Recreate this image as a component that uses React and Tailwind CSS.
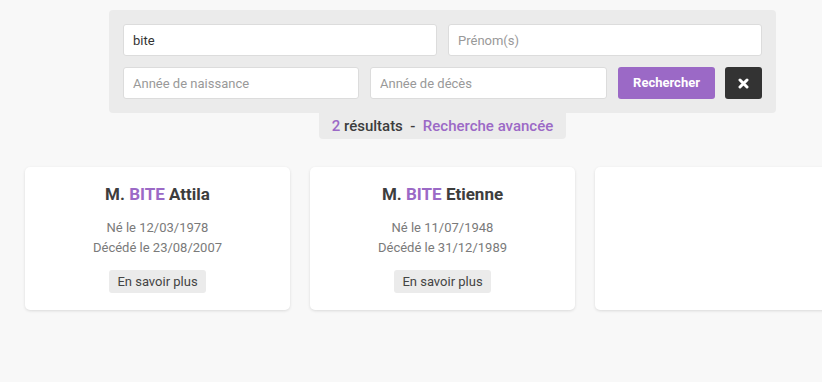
import { useState } from 'react'

const PEOPLE = [
  { civ: 'M.', nom: 'BITE', prenom: 'Attila', ne: '12/03/1978', dc: '23/08/2007' },
  { civ: 'M.', nom: 'BITE', prenom: 'Etienne', ne: '11/07/1948', dc: '31/12/1989' },
]

/* icône "fermer" façon fa-times, en trait épais */
function TimesIcon() {
  return (
    <svg width="11" height="11" viewBox="0 0 11 11">
      <path d="M2 2 L9 9 M9 2 L2 9" stroke="#fff" strokeWidth="3" strokeLinecap="round" />
    </svg>
  )
}

function Field({ value, onChange, placeholder, className = '' }) {
  return (
    <input value={value} onChange={e => onChange(e.target.value)} placeholder={placeholder}
      className={`h-8 min-w-0 rounded-[3px] border border-[#dcdcdc] bg-white px-[9px] text-[13px] text-[#333] placeholder:text-[#999] outline-none ${className}`} />
  )
}

function Card({ p }) {
  return (
    <div className="flex h-[143px] w-[265px] shrink-0 flex-col items-center rounded-[5px] bg-white shadow-[0_1px_3px_rgba(0,0,0,0.12)]">
      {p && (
        <>
          <div className="mt-[16px] text-[17px] font-bold leading-[22px] text-[#3d3d3d]">
            {p.civ} <span className="text-[#9b69c6]">{p.nom}</span> {p.prenom}
          </div>
          <div className="mt-[13px] text-center text-[13px] leading-[20px] text-[#7a7a7a]">
            <div>Né le {p.ne}</div>
            <div>Décédé le {p.dc}</div>
          </div>
          <button className="mt-[12px] h-[23px] rounded-[3px] bg-[#ebebeb] px-[8px] text-[13px] text-[#444]">
            En savoir plus
          </button>
        </>
      )}
    </div>
  )
}

export default function App() {
  const [nom, setNom] = useState('bite')
  const [prenom, setPrenom] = useState('')
  const [naiss, setNaiss] = useState('')
  const [deces, setDeces] = useState('')

  return (
    <div className="h-[382px] w-[822px] overflow-hidden bg-[#f8f8f8] font-['Roboto',sans-serif]">
      <div className="ml-[109px] w-[667px] pt-[10px]">
        <div className="flex flex-col gap-[11px] rounded-[4px] bg-[#ebebeb] p-[14px]">
          <div className="flex gap-[11px]">
            <Field value={nom} onChange={setNom} placeholder="Nom" className="flex-1" />
            <Field value={prenom} onChange={setPrenom} placeholder="Prénom(s)" className="flex-1" />
          </div>
          <div className="flex">
            <Field value={naiss} onChange={setNaiss} placeholder="Année de naissance" className="w-[236px]" />
            <Field value={deces} onChange={setDeces} placeholder="Année de décès" className="ml-[11px] w-[237px]" />
            <button className="ml-[11px] h-8 w-[97px] rounded-[3px] bg-[#9b69c6] text-[13px] font-bold text-white">
              Rechercher
            </button>
            <button className="ml-[10px] flex h-8 w-[37px] items-center justify-center rounded-[3px] bg-[#333]">
              <TimesIcon />
            </button>
          </div>
        </div>
        <div className="flex justify-center">
          <div className="flex h-[26px] items-center rounded-b-[4px] bg-[#ebebeb] px-[13px] text-[15px] font-medium text-[#3d3d3d]">
            <span className="text-[#9b69c6]">2</span>&nbsp;résultats&nbsp;&nbsp;-&nbsp;&nbsp;
            <span className="text-[#9b69c6]">Recherche avancée</span>
          </div>
        </div>
      </div>
      <div className="ml-[25px] mt-[28px] flex gap-[20px]">
        {PEOPLE.map((p, i) => <Card key={i} p={p} />)}
        <Card />
      </div>
    </div>
  )
}
